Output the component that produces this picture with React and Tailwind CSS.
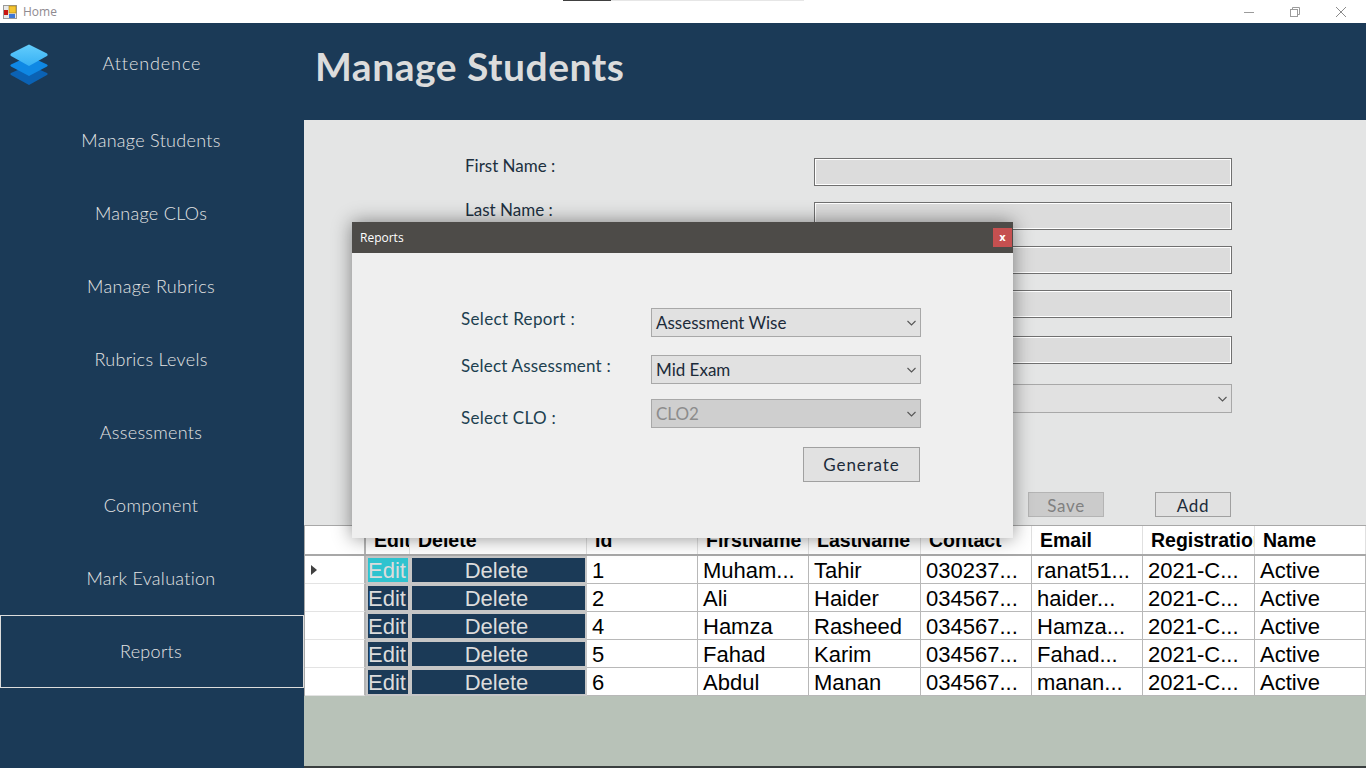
const gothic = "[font-family:Lato,sans-serif]";

const navItems = ["Manage Students", "Manage CLOs", "Manage Rubrics", "Rubrics Levels", "Assessments", "Component", "Mark Evaluation", "Reports"];
const rows = [
  ["1", "Muham...", "Tahir", "030237...", "ranat51...", "2021-C...", "Active"],
  ["2", "Ali", "Haider", "034567...", "haider...", "2021-C...", "Active"],
  ["4", "Hamza", "Rasheed", "034567...", "Hamza...", "2021-C...", "Active"],
  ["5", "Fahad", "Karim", "034567...", "Fahad...", "2021-C...", "Active"],
  ["6", "Abdul", "Manan", "034567...", "manan...", "2021-C...", "Active"],
];
const headers = ["Edit", "Delete", "Id", "FirstName", "LastName", "Contact", "Email", "Registration", "Name"];
const cols = "grid grid-cols-[61px_44px_177px_111px_111px_112px_111px_111px_112px_111px]";

function Logo() {
  return (
    <svg width="40" height="41" viewBox="0 0 40 41">
      <defs>
        <linearGradient id="top" x1="0" y1="0" x2="0" y2="1">
          <stop offset="0" stopColor="#63cdfc" />
          <stop offset="1" stopColor="#36b0f4" />
        </linearGradient>
      </defs>
      <path d="M20 21 L38 29 Q39.5 30 38 31 L20 41 L2 31 Q0.5 30 2 29 Z" fill="#0b62b4" />
      <path d="M20 12 L38 20.5 Q39.5 21.5 38 22.5 L20 32 L2 22.5 Q0.5 21.5 2 20.5 Z" fill="#0f88e4" />
      <path d="M20 0.5 L38 9.5 Q39.5 11 38 12 L20 22 L2 12 Q0.5 11 2 9.5 Z" fill="url(#top)" />
    </svg>
  );
}

function AppIcon() {
  return (
    <svg width="14" height="14" viewBox="0 0 14 14">
      <rect x="0.5" y="0.5" width="13" height="13" fill="#e8e8e8" stroke="#9a9a9a" />
      <rect x="1" y="5" width="4" height="5" fill="#c8130f" />
      <rect x="6" y="1" width="7" height="7" fill="#f4c430" stroke="#a87f10" strokeWidth="0.6" />
      <rect x="6" y="9" width="6" height="4" fill="#3f78d8" />
    </svg>
  );
}

function Chevron() {
  return (
    <svg width="9" height="6" viewBox="0 0 9 6" fill="none" stroke="#555" strokeWidth="1.1">
      <path d="M0.5 1 L4.5 5 L8.5 1" />
    </svg>
  );
}

function DropDown({ value, disabled, className }) {
  return (
    <div className={`flex items-center justify-between border border-[#a8a8a8] pl-[4px] pr-[4px] text-[17px] ${disabled ? "bg-[#cfcfcf] text-[#8c8c8c]" : "bg-[#e1e1e1] text-[#1c2b3a]"} ${className}`}>
      <span>{value}</span>
      <Chevron />
    </div>
  );
}

function FormInput({ label, top }) {
  return (
    <div className={`flex items-start ${top}`}>
      <div className="w-[350px] pl-[1px] text-[17px] leading-[15px] text-[#20303f]">{label}</div>
      <div className="h-[28px] w-[418px] border border-[#707070] bg-[#dcdcdc] shadow-[inset_0_0_0_1px_#ffffff]" />
    </div>
  );
}

export default function App() {
  return (
    <div className={`relative flex h-[768px] w-[1366px] flex-col overflow-hidden bg-white ${gothic}`}>
      <div className="flex h-[23px] shrink-0 items-center bg-white">
        <div className="ml-[3px]"><AppIcon /></div>
        <span className="ml-[6px] text-[12px] text-[#8f8a90] [font-family:'Open_Sans',sans-serif]">Home</span>
        <div className="ml-auto flex items-center">
          <svg width="12" height="12" viewBox="0 0 12 12" className="mr-[34px]" stroke="#9b9b9b" fill="none"><path d="M1 6.5 H11" /></svg>
          <svg width="12" height="12" viewBox="0 0 12 12" className="mr-[34px]" stroke="#9b9b9b" fill="none"><rect x="1.5" y="3.5" width="7" height="7" /><path d="M3.5 3 V1.5 H10.5 V8.5 H9" /></svg>
          <svg width="12" height="12" viewBox="0 0 12 12" className="mr-[19px]" stroke="#8b8b8b" fill="none"><path d="M1 1 L11 11 M11 1 L1 11" /></svg>
        </div>
      </div>
      <div className="absolute left-[563px] top-0 flex h-[1px]">
        <div className="w-[48px] bg-[#404040]" />
        <div className="w-[193px] bg-[#e6e6e6]" />
      </div>

      <div className="flex min-h-0 flex-1">
        <aside className="flex w-[304px] shrink-0 flex-col bg-[#1b3a57] text-[18px] font-light tracking-[0.3px] text-[#e4e4e4]">
          <div className="grid h-[81px] grid-cols-[1fr_auto_1fr] items-center">
            <div className="pl-[9px] pt-[1px]"><Logo /></div>
            <span className="tracking-[0.9px]">Attendence</span>
            <div />
          </div>
          {navItems.map((n) => (
            <div
              key={n}
              className={`flex h-[73px] shrink-0 items-center justify-center pr-[2px] ${n === "Reports" ? "border border-[#dcdcdc]" : ""}`}
            >
              {n}
            </div>
          ))}
        </aside>

        <main className="flex min-w-0 flex-1 flex-col border-b-2 border-[#3a3f3f] bg-[#b8c2b8]">
          <header className="flex h-[97px] shrink-0 items-center bg-[#1b3a57] pb-[10px] pl-[11px]">
            <h1 className="text-[39px] font-bold tracking-[0.5px] text-[#dcdcdc]">Manage Students</h1>
          </header>

          <section className="flex h-[405px] shrink-0 flex-col bg-[#e4e5e5] pl-[160px] pt-[38px]">
            <FormInput label="First Name :" />
            <FormInput label="Last Name :" top="mt-[16px]" />
            <FormInput top="mt-[16px]" />
            <FormInput top="mt-[16px]" />
            <FormInput top="mt-[18px]" />
            <div className="mt-[20px] flex">
              <div className="w-[350px]" />
              <DropDown className="h-[29px] w-[418px]" />
            </div>
            <div className="mt-[79px] flex h-[25px] w-[767px] items-stretch justify-end gap-[51px] pl-[1px] text-[17px] tracking-[0.7px]">
              <div className="flex w-[76px] items-center justify-center border border-[#b4b4b4] bg-[#cbcbcb] pt-[2px] text-[#808080]">Save</div>
              <div className="flex w-[76px] items-center justify-center border border-[#a0a0a0] bg-[#e1e1e1] pt-[2px] text-[#1c2b3a]">Add</div>
            </div>
          </section>

          <section className="shrink-0 border-l border-t border-[#a8a8a8] bg-white leading-none text-black [font-family:'Liberation_Sans',sans-serif]">
            <div className={`${cols} h-[30px] border-b-2 border-[#a8a8a8] text-[19.5px] font-bold`}>
              <div className="border-r-2 border-[#b5b5b5]" />
              {headers.map((h) => (
                <div key={h} className="flex items-center overflow-hidden whitespace-nowrap border-r border-[#e0e0e0] pl-[8px] pt-[1px]">{h}</div>
              ))}
            </div>
            {rows.map((r, i) => (
              <div key={r[0]} className={`${cols} h-[28px] text-[22px]`}>
                <div className="flex items-center border-b border-r-2 border-b-[#e3e3e3] border-r-[#b5b5b5] pl-[6px]">
                  {i === 0 && <svg width="6" height="10" viewBox="0 0 6 10"><path d="M0 0 L6 5 L0 10 Z" fill="#404040" /></svg>}
                </div>
                <div className={`flex items-center justify-center overflow-hidden border-2 border-[#c6c6c6] pr-[2px] pt-[1px] text-[#dcdcdc] ${i === 0 ? "bg-[#2fc3cf]" : "bg-[#1b3a57]"}`}>Edit</div>
                <div className="flex items-center justify-center border-2 border-[#c6c6c6] bg-[#1b3a57] pr-[4px] pt-[1px] text-[#dcdcdc]">Delete</div>
                {r.map((c, j) => (
                  <div key={j} className="flex items-center overflow-hidden whitespace-nowrap border-b border-r border-[#b8b8b8] pl-[5px] pt-[3px]">{c}</div>
                ))}
              </div>
            ))}
          </section>
        </main>
      </div>

      <div className="absolute left-[352px] top-[222px] flex h-[316px] w-[661px] flex-col bg-[#efefef] shadow-[0_0_18px_rgba(0,0,0,0.45)]">
        <div className="flex h-[31px] shrink-0 items-center justify-between bg-[#4d4b48] pl-[8px] pr-[1px]">
          <span className="text-[12px] text-white [font-family:'Open_Sans',sans-serif]">Reports</span>
          <div className="flex h-[19px] w-[19px] items-center justify-center bg-[#c55050] text-[10px] font-bold leading-none text-white [font-family:'DejaVu_Sans',sans-serif]">x</div>
        </div>
        <div className="flex flex-col pl-[109px] pt-[55px] text-[17px] text-[#20404f]">
          <div className="flex h-[29px] items-start">
            <span className="w-[190px] leading-[22px] tracking-[0.35px]">Select Report :</span>
            <DropDown value="Assessment Wise" className="h-[29px] w-[270px] text-[16.5px]" />
          </div>
          <div className="mt-[18px] flex h-[29px] items-start">
            <span className="w-[190px] leading-[22px] tracking-[0.2px]">Select Assessment :</span>
            <DropDown value="Mid Exam" className="h-[29px] w-[270px]" />
          </div>
          <div className="mt-[15px] flex h-[29px] items-start">
            <span className="w-[190px] pt-[8px] leading-[22px] tracking-[0.3px]">Select CLO :</span>
            <DropDown value="CLO2" disabled className="h-[29px] w-[270px]" />
          </div>
          <div className="mt-[19px] flex w-[459px] justify-end">
            <div className="flex h-[35px] w-[117px] items-center justify-center border border-[#a0a0a0] bg-[#e1e1e1] tracking-[0.9px] text-[#1c2b3a]">Generate</div>
          </div>
        </div>
      </div>
    </div>
  );
}
